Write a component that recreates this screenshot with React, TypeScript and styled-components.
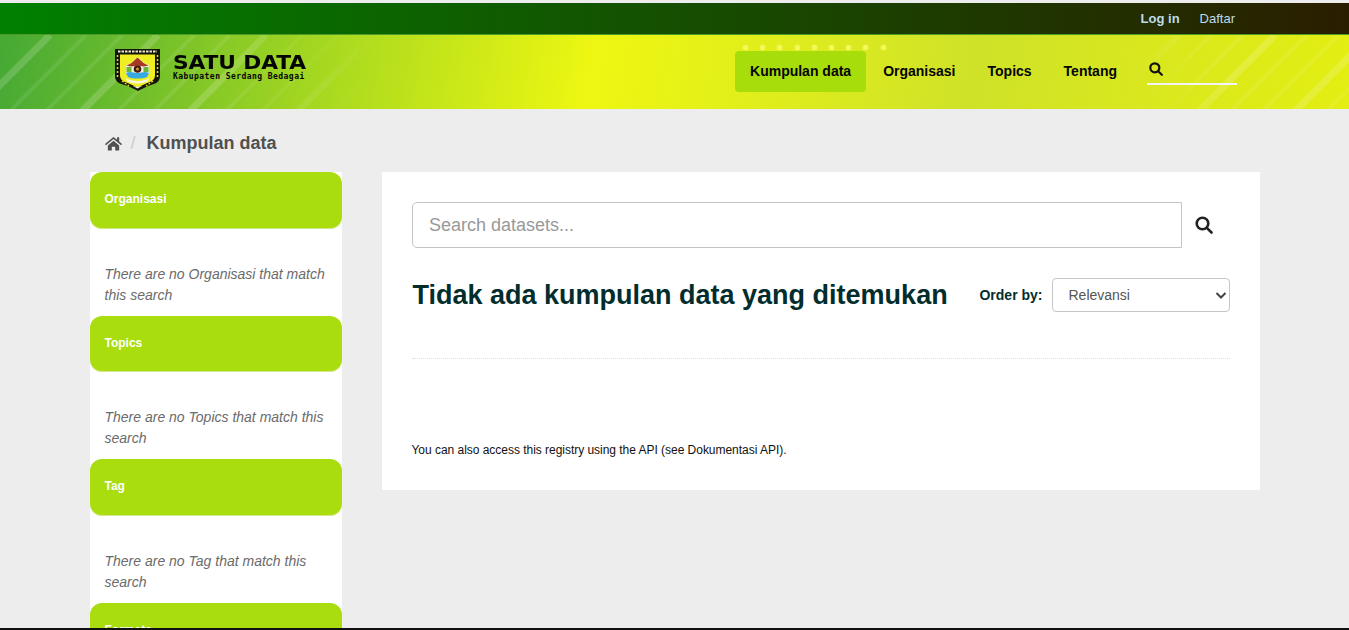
import React from "react";
import styled, { createGlobalStyle } from "styled-components";

const Global = createGlobalStyle`
  html, body { margin: 0; padding: 0; height: 630px; overflow: hidden; background: #ededed; }
  body { font-family: "Liberation Sans", Arial, sans-serif; font-size: 14px; color: #444; }
  * { box-sizing: border-box; }
`;
const Page = styled.div`
  height: 630px; overflow: hidden; display: flex; flex-direction: column; position: relative;
  border-top: 3px solid #ededed; border-bottom: 2px solid #111; background: #ededed;
`;
const TaskbarGlint = styled.i`
  position: absolute; bottom: -2px; height: 2px; background: #4a4a4a; left: 245px; width: 48px;
`;
const TopBar = styled.div`
  height: 31px; flex: none; display: flex; justify-content: flex-end; align-items: center;
  gap: 20px; padding: 0 114px 0 0; background: linear-gradient(90deg, #008000 0%, #2a1e00 100%);
`;
const TopLink = styled.a<{ $bold?: boolean }>`
  color: #bcdcea; font-size: 13px; font-weight: ${p => p.$bold ? 700 : 400};
`;
const Header = styled.header`
  height: 75px; flex: none; display: flex; align-items: center; padding: 0 112px 0 114px; position: relative; overflow: hidden;
  background: linear-gradient(100deg, #45a935 0%, #a6d820 24%, #eef711 44%, #cfe228 72%, #e4ee12 100%);
  border-top: 1px solid #4d9c2a;
`;
const Stripes = styled.svg<{ $side: "left" | "right" }>`
  position: absolute; top: 0; height: 74px; pointer-events: none;
  ${p => p.$side}: 0;
  -webkit-mask-image: linear-gradient(${p => p.$side === "left" ? "90deg" : "270deg"}, #000 55%, transparent 100%);
  mask-image: linear-gradient(${p => p.$side === "left" ? "90deg" : "270deg"}, #000 55%, transparent 100%);
`;
const Brand = styled.div`
  display: flex; align-items: center; gap: 12px; position: relative; margin-top: -4px;
`;
const BrandText = styled.div`
  display: flex; flex-direction: column; color: #050505; margin-top: -5px;
`;
const BrandName = styled.span`
  font: 700 19.5px/18px "DejaVu Sans", sans-serif; letter-spacing: -.1px; transform: scaleX(1.115); transform-origin: left center; white-space: nowrap;
`;
const BrandSub = styled.span`
  font: 700 8px/9px "DejaVu Sans Mono", monospace; letter-spacing: .45px; white-space: nowrap;
`;
const Nav = styled.nav`
  margin-left: auto; display: flex; align-items: center; position: relative; margin-top: -2px;
`;
const Dots = styled.div`
  position: absolute; left: 8px; top: -6px; display: flex; gap: 12.2px;
`;
const Dot = styled.i`
  width: 5px; height: 5px; border-radius: 50%; background: #f6f85a; box-shadow: 0 0 2px #f6f85a;
`;
const NavItem = styled.a<{ $active?: boolean }>`
  color: #050505; font-weight: 700; font-size: 14px; height: 41px; line-height: 41px; padding: 0 15px; border-radius: 4px; margin-right: 2px;
  background: ${p => p.$active ? "#a8dd0c" : "transparent"};
`;
const NavSearch = styled.div`
  width: 90px; height: 29px; margin-left: 13px; border-bottom: 2px solid #f3f3f3; padding: 6px 0 0 2px; position: relative; top: -1px;
`;
const Crumbs = styled.div`
  width: 1170px; margin: 0 auto; height: 63px; flex: none; display: flex; align-items: center; padding: 6px 0 0 15px; gap: 9px;
`;
const Sep = styled.span` color: #ccc; font-size: 18px; `;
const CrumbText = styled.span` font-size: 18px; font-weight: 700; color: #505050; margin-left: 2px; `;
const Wrap = styled.div`
  width: 1170px; margin: 0 auto; display: flex; align-items: flex-start; gap: 40px;
`;
const Side = styled.aside` width: 252px; flex: none; background: #fff; `;
const FilterHead = styled.h2`
  margin: 0; height: 56.5px; padding: 19px 15px 0; background: #a9dd0e; color: #fff; font-size: 12px; line-height: 16px; font-weight: 700;
  border-radius: 12px; border-bottom: 1px solid #cfe88a;
`;
const Empty = styled.p`
  margin: 0; height: 87.17px; padding: 35px 15px 0; font-style: italic; font-size: 14px; line-height: 21px; color: #6b6b6b;
`;
const Main = styled.main`
  width: 878px; height: 318px; flex: none; background: #fff; padding: 30px 30px 0;
`;
const SearchRow = styled.div` display: flex; align-items: center; `;
const SearchInput = styled.div`
  width: 770px; height: 46px; border: 1px solid #c4c4c4; border-radius: 5px 0 0 5px; padding: 0 16.5px; line-height: 45px; font-size: 18px; color: #999;
`;
const SearchBtn = styled.div` margin-left: 13px; display: flex; `;
const TitleRow = styled.div`
  display: flex; align-items: center; justify-content: space-between; margin-top: 30px; height: 34px;
`;
const Title = styled.h1`
  margin: 0 0 0 1px; font-size: 27px; line-height: 34px; font-weight: 700; color: #022d2d;
`;
const Order = styled.div` display: flex; align-items: center; gap: 9px; `;
const OrderLabel = styled.label` font-size: 14px; font-weight: 700; color: #022d2d; `;
const SelectBox = styled.div`
  width: 178px; height: 34px; border: 1px solid #c6c6c6; border-radius: 4px; padding-left: 16px; line-height: 32px; font-size: 14px; color: #555;
  display: flex; align-items: center; justify-content: space-between;
`;
const Rule = styled.hr`
  border: 0; border-top: 1px dotted #ddd; margin: 46px 0 0;
`;
const Api = styled.p`
  margin: 83px 0 0; font-size: 12px; line-height: 16px; color: #111; letter-spacing: -.03px;
`;
const Shield = () => (
  <svg width="47" height="44" viewBox="0 0 47 44">
    <path d="M1 1h45v27c0 7-6 8-12 10l-10 5-10-5C7 36 1 35 1 28z" fill="#15150c" />
    <path d="M6 6.5h35v21c0 6-7 7-11 9l-6.5 3-6.5-3c-4-2-11-3-11-9z" fill="#eeee22" />
    <path d="M4 3.5h39" stroke="#e8e8c8" strokeWidth="2.2" strokeDasharray="2.5 1" />
    <path d="M3.5 7v22M43.5 7v22" stroke="#e5dc20" strokeWidth="1.5" strokeDasharray="2 2" />
    <path d="M8 33l7 5M39 33l-7 5" stroke="#e5dc20" strokeWidth="1.4" strokeDasharray="2 1.5" />
    <path d="M23.5 9l6 5.5 5.5 3v8l-3 3H15l-3-3v-8l5.5-3z" fill="#f2f2de" />
    <path d="M23.5 9.5l6 5.5 5 2.7-5 .8-6-1-6 1-5-.8 5-2.700z" fill="#a83822" />
    <path d="M12.5 19l5 0v5h-5zM29.5 19h5v5h-5z" fill="#6ab53a" />
    <path d="M12 25c4-2.5 8 0 11.5 0s7.5-2.5 11.5 0l-2 4c-5 2-14 2-19 0z" fill="#38a8e4" />
    <circle cx="23.5" cy="21" r="3.8" fill="#4a1a12" />
    <circle cx="23.5" cy="21" r="1.5" fill="#c9a038" />
    <path d="M12 30c6 4 17 4 23 0l-1 3.5c-5 2.500-16 2.500-21 0z" fill="#f4f4d8" />
    <path d="M18 37.5c3 1.500 8 1.500 11 0l-5.500 3z" fill="#f4f4d8" />
  </svg>
);
const Mag = ({ size, w = 2.6, color = "#222" }: { size: number; w?: number; color?: string }) => (
  <svg width={size} height={size} viewBox="0 0 18 18" fill="none" stroke={color} strokeWidth={w}>
    <circle cx="7.5" cy="7.5" r="5.8" />
    <path d="M11.8 11.8L16.5 16.5" strokeLinecap="round" />
  </svg>
);
const stripeLines = (n: number, gap: number, k: number) =>
  Array.from({ length: n }, (_, i) => (
    <path key={i} d={`M${i * gap - 30} 80L${i * gap + 50} 0`} stroke="#fff"
      strokeOpacity={(i % 3 === 0 ? .17 : .09) * k} strokeWidth={i % 3 === 0 ? 7 : 4} />
  ));

export default function App() {
  return (
    <Page>
      <Global />
      <TopBar><TopLink $bold>Log in</TopLink><TopLink>Daftar</TopLink></TopBar>
      <Header>
        <Stripes $side="left" width="390" viewBox="0 0 390 74">{stripeLines(12, 36, 1)}</Stripes>
        <Stripes $side="right" width="220" viewBox="0 0 220 74">{stripeLines(8, 32, .9)}</Stripes>
        <Brand>
          <Shield />
          <BrandText><BrandName>SATU DATA</BrandName><BrandSub>Kabupaten Serdang Bedagai</BrandSub></BrandText>
        </Brand>
        <Nav>
          <Dots>{Array.from({ length: 9 }, (_, i) => <Dot key={i} />)}</Dots>
          <NavItem $active>Kumpulan data</NavItem>
          <NavItem>Organisasi</NavItem>
          <NavItem>Topics</NavItem>
          <NavItem>Tentang</NavItem>
          <NavSearch><Mag size={14} w={2.8} color="#111" /></NavSearch>
        </Nav>
      </Header>
      <Crumbs>
        <svg width="17" height="15" viewBox="0 0 18 15"><path d="M9 0.5L0 8l1 1.3L9 2.8l8 6.5L18 8l-3-2.5V1h-2.2v2.6zM3 9.5V15h4.2v-4h3.6v4H15V9.5L9 4.5z" fill="#505050" /></svg>
        <Sep>/</Sep>
        <CrumbText>Kumpulan data</CrumbText>
      </Crumbs>
      <Wrap>
        <Side>
          <FilterHead>Organisasi</FilterHead>
          <Empty>There are no Organisasi that match this search</Empty>
          <FilterHead>Topics</FilterHead>
          <Empty>There are no Topics that match this search</Empty>
          <FilterHead>Tag</FilterHead>
          <Empty>There are no Tag that match this search</Empty>
          <FilterHead>Formats</FilterHead>
        </Side>
        <Main>
          <SearchRow>
            <SearchInput>Search datasets...</SearchInput>
            <SearchBtn><Mag size={18} /></SearchBtn>
          </SearchRow>
          <TitleRow>
            <Title>Tidak ada kumpulan data yang ditemukan</Title>
            <Order>
              <OrderLabel>Order by:</OrderLabel>
              <SelectBox>Relevansi
                <svg width="16" height="16" viewBox="0 0 16 16" fill="none" stroke="#444" strokeWidth="2"><path d="M3.5 6l4.5 4.5L12.5 6" /></svg>
              </SelectBox>
            </Order>
          </TitleRow>
          <Rule />
          <Api>You can also access this registry using the API (see Dokumentasi API).</Api>
        </Main>
      </Wrap>
      <TaskbarGlint />
    </Page>
  );
}
